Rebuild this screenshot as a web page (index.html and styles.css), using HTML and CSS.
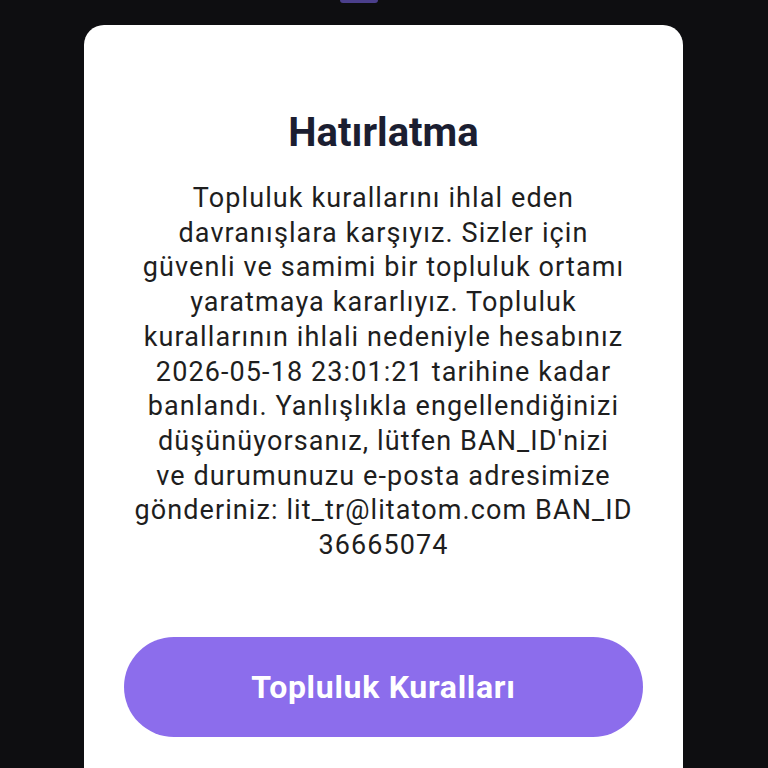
FILE: index.html
```html
<!DOCTYPE html>
<html lang="tr">

<head>
    <meta charset="UTF-8">
    <meta name="viewport" content="width=device-width, initial-scale=1.0">
    <title>Hatırlatma</title>
    <link rel="stylesheet" href="styles.css">
</head>

<body>
    <div class="peek"></div>

    <div class="card">
        <h1 class="title">Hatırlatma</h1>
        <p class="message">Topluluk kurallarını ihlal eden<br>
            davranışlara karşıyız. Sizler için<br>
            güvenli ve samimi bir topluluk ortamı<br>
            yaratmaya kararlıyız. Topluluk<br>
            kurallarının ihlali nedeniyle hesabınız<br>
            2026-05-18 23:01:21 tarihine kadar<br>
            banlandı. Yanlışlıkla engellendiğinizi<br>
            düşünüyorsanız, lütfen BAN_ID'nizi<br>
            ve durumunuzu e-posta adresimize<br>
            gönderiniz: lit_tr@litatom.com BAN_ID<br>
            36665074</p>
        <button class="btn-rules">Topluluk Kuralları</button>
    </div>
</body>

</html>
```

FILE: styles.css
```css
* {
    margin: 0;
    padding: 0;
    box-sizing: border-box;
}

body {
    width: 768px;
    height: 768px;
    overflow: hidden;
    background: #0e0e11;
    font-family: Roboto, "Noto Sans", sans-serif;
    color: #222222;
}

.peek {
    width: 38px;
    height: 3px;
    margin-left: 340px;
    background: #4b3f8c;
    border-radius: 0 0 4px 4px;
}

.card {
    width: 599px;
    height: 743px;
    margin: 22px 0 0 84px;
    padding: 84px 20px 0;
    background: #ffffff;
    border-radius: 20px 20px 0 0;
    text-align: center;
}

.title {
    font-size: 40px;
    line-height: 48px;
    font-weight: 700;
    color: #1b1e31;
}

.message {
    margin-top: 24px;
    font-size: 27px;
    line-height: 34.7px;
    letter-spacing: 1.1px;
    white-space: nowrap;
    color: #1e1e1e;
}

.btn-rules {
    display: block;
    width: 519px;
    height: 100px;
    margin: 74px auto 0;
    border: none;
    border-radius: 50px;
    background: #8c6dec;
    color: #ffffff;
    font-family: Roboto, "Noto Sans", sans-serif;
    font-size: 32px;
    font-weight: 700;
    letter-spacing: 0.7px;
    cursor: pointer;
}
```
